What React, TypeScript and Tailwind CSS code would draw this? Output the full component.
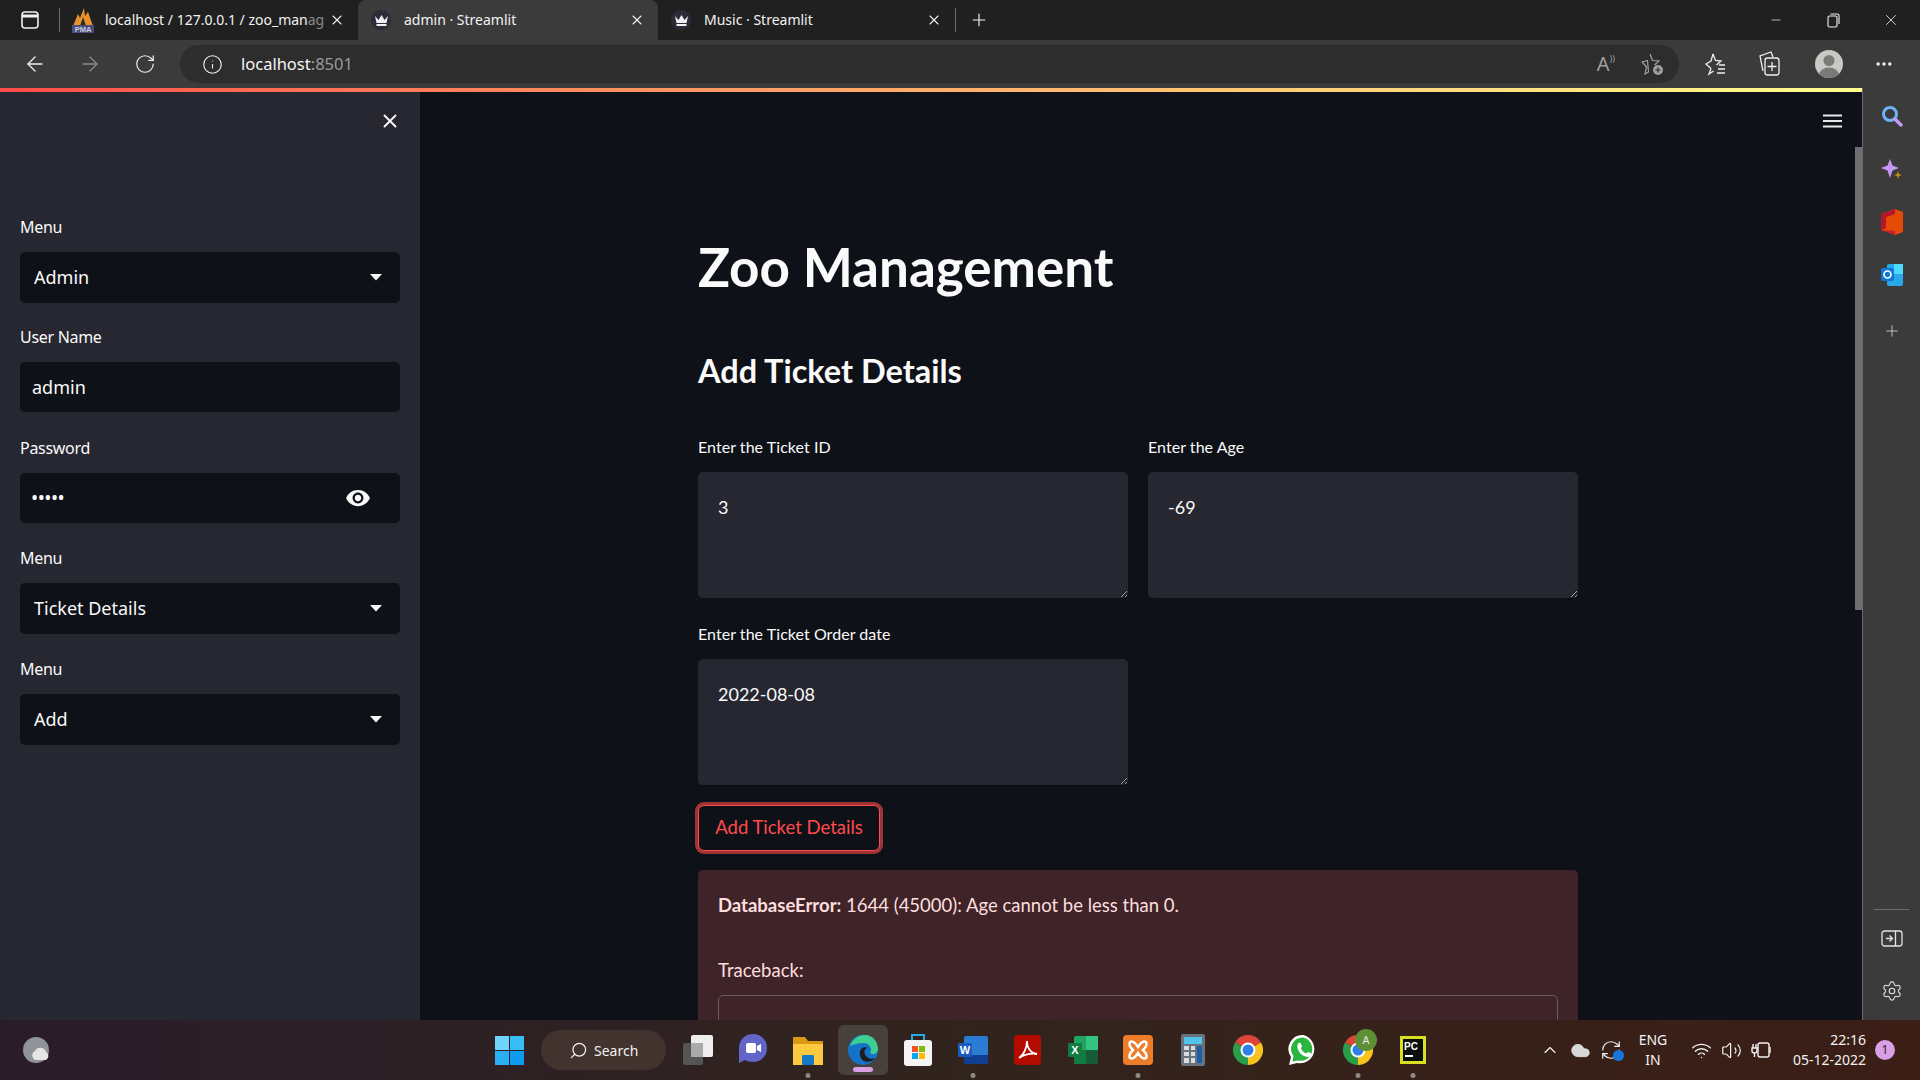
import React from "react";
import { ArrowLeft, ArrowRight, RotateCw, Info, Plus, X, Minus, Search, MoreHorizontal, Settings, ChevronUp, Volume2, Wifi, RefreshCw, Cloud } from "lucide-react";

const Crown = () => (
  <span className="flex h-5 w-5 items-center justify-center rounded-full bg-[#2b2b3a]">
    <svg width="13" height="11" viewBox="0 0 13 11"><path d="M0 1 3.5 5 6.500 0 9.500 5 13 1 11.500 8H1.500ZM1.500 9H11.500V11H1.500Z" fill="#f0f0f0" /></svg>
  </span>
);

const Pma = () => (
  <svg width="22" height="26" viewBox="0 0 22 26">
    <path d="M1 19 6 7 8 11 12 1 13 9 16 5 21 19Z" fill="#e8912c" />
    <path d="M8 19 11 10 14 19Z" fill="#2b2b2b" />
    <rect x="0" y="18" width="22" height="8" fill="#4a4f7a" />
    <text x="11" y="25" textAnchor="middle" fontSize="7.500" fontWeight="700" fill="#c9cbe0" fontFamily="Liberation Sans">PMA</text>
  </svg>
);

const Tab = ({ active, icon, label, width }: { active?: boolean; icon: React.ReactNode; label: string; width: string }) => (
  <div className={`relative flex h-10 items-center ${width} ${active ? "rounded-t-lg bg-[#3b3b3b]" : ""}`}>
    <span className="ml-[10px] flex w-[26px] shrink-0 justify-center">{icon}</span>
    <span className="ml-[10px] w-[222px] whitespace-nowrap pb-[1px] text-[14px] text-[#f2f2f2]">{label}</span>
    <X size={16} strokeWidth={1.6} className="absolute right-[13px] text-[#f0f0f0]" />
  </div>
);

const Label = ({ children, className = "" }: { children: React.ReactNode; className?: string }) => (
  <div className={`flex h-[37px] items-start pt-[3px] text-[16px] leading-[19px] text-[#fafafa] ${className}`}>{children}</div>
);

const Caret = () => (
  <svg width="12" height="7" viewBox="0 0 12 7"><path d="M0 0H12L6 6.500Z" fill="#fafafa" /></svg>
);

const Select = ({ label, value, cls = "" }: { label: string; value: string; cls?: string }) => (
  <div className={cls}>
    <Label className="tracking-[-0.3px]">{label}</Label>
    <div className="flex h-[51px] items-center justify-between rounded-[5px] bg-[#0e1117] pl-[14px] pr-[18px] text-[18px] text-[#fafafa]">
      {value}
      <Caret />
    </div>
  </div>
);

const Area = ({ label, value, cls = "" }: { label: string; value: string; cls?: string }) => (
  <div className={`w-[430px] ${cls}`}>
    <Label className="!pt-[2px] tracking-[0.05px]">{label}</Label>
    <textarea
      readOnly
      value={value}
      className="block h-[127px] w-full resize-y rounded-[5px] border-b border-[#0b0d12] bg-[#262730] px-[20px] py-[21px] text-[18px] leading-[28px] text-[#fafafa] outline-none [color-scheme:dark]"
    />
  </div>
);

const Dot = () => <span className="absolute bottom-[2px] left-1/2 h-[5px] w-[5px] -translate-x-1/2 rounded-full bg-[#8d8a86]" />;

const Cell = ({ children, dot }: { children: React.ReactNode; dot?: boolean }) => (
  <div className="relative flex h-[60px] w-[55px] items-center justify-center">
    {children}
    {dot && <Dot />}
  </div>
);

const Chrome = () => (
  <svg width="30" height="30" viewBox="0 0 30 30">
    <path d="M15 15 2 7.500A15 15 0 0 1 28 7.500Z" fill="#dd4437" />
    <path d="M15 15 2 7.500A15 15 0 0 0 15 30Z" fill="#2a9d4a" />
    <path d="M15 15 28 7.500A15 15 0 0 1 15 30Z" fill="#f8c31c" />
    <circle cx="15" cy="15" r="7.500" fill="#fff" />
    <circle cx="15" cy="15" r="5.500" fill="#2f7fe8" />
  </svg>
);

export default function App() {
  return (
    <div className="flex h-[1080px] w-[1920px] flex-col overflow-hidden bg-[#0e1117] [font-family:'Noto_Sans',sans-serif]">
      {/* tab strip */}
      <div className="flex h-10 shrink-0 items-center bg-[#202020]">
        <div className="flex w-[59px] justify-center">
          <svg width="18" height="18" viewBox="0 0 18 18" fill="none" stroke="#f2f2f2" strokeWidth="1.600"><rect x="1" y="1" width="16" height="16" rx="3" /><path d="M1 5H17" strokeWidth="3" /></svg>
        </div>
        <div className="h-6 w-px bg-[#6a6a6a]" />
        <div className="relative flex h-10 w-[298px] items-center">
          <span className="ml-[12px] w-[24px] shrink-0"><Pma /></span>
          <span className="ml-[9px] w-[215px] whitespace-nowrap pb-[1px] text-[14px] text-[#f2f2f2]">localhost / 127.0.0.1 / zoo_man<span className="text-[#8a8a8a]">ag</span></span>
          <X size={16} strokeWidth={1.6} className="absolute right-[13px] text-[#f0f0f0]" />
        </div>
        <Tab active width="w-[300px]" icon={<Crown />} label="admin · Streamlit" />
        <Tab width="w-[297px]" icon={<Crown />} label="Music · Streamlit" />
        <div className="h-6 w-px bg-[#6a6a6a]" />
        <Plus size={20} strokeWidth={1.4} className="ml-[13px] text-[#f2f2f2]" />
        <div className="ml-auto flex items-center text-[#f2f2f2]">
          <span className="flex w-[57px] justify-center"><Minus size={14} strokeWidth={1.2} /></span>
          <span className="flex w-[58px] justify-center">
            <svg width="13" height="15" viewBox="0 0 13 15" fill="none" stroke="#f2f2f2" strokeWidth="1.100"><rect x="1" y="3" width="9" height="11" rx="1.500" /><path d="M3.500 1H10.500A1.500 1.500 0 0 1 12 2.500V11" /></svg>
          </span>
          <span className="flex w-[58px] justify-center"><X size={18} strokeWidth={1.1} /></span>
        </div>
      </div>

      {/* toolbar */}
      <div className="flex h-12 shrink-0 items-center bg-[#3b3b3b] text-[#f0f0f0]">
        <div className="flex w-[180px] items-center">
          <span className="flex w-[70px] justify-center"><ArrowLeft size={24} strokeWidth={1.3} /></span>
          <span className="flex w-[40px] justify-center text-[#8a8a8a]"><ArrowRight size={24} strokeWidth={1.3} /></span>
          <span className="flex w-[70px] justify-center"><RotateCw size={22} strokeWidth={1.3} /></span>
        </div>
        <div className="flex h-[38px] w-[1499px] items-center rounded-full bg-[#2d2d2d]">
          <Info size={21} strokeWidth={1.3} className="ml-[22px]" />
          <span className="ml-[18px] text-[16.500px] text-[#f5f5f5]">localhost<span className="text-[#9a9a9a]">:8501</span></span>
          <div className="ml-auto mr-[14px] flex items-center gap-[26px] text-[#a0a0a0]">
            <span className="flex items-start text-[20px] leading-none">A<span className="text-[9px]">))</span></span>
            <svg width="24" height="24" viewBox="0 0 24 24" fill="none" stroke="#a0a0a0" strokeWidth="1.200"><path d="M9 2 11.500 8.500 18 9 13.500 13M7.500 20 4 22 5.500 15 1 10 6.500 8.500Z" /><circle cx="17" cy="18" r="5" fill="#a0a0a0" stroke="none" /><path d="M17 15.500V20.500M14.500 18H19.500" stroke="#2d2d2d" /></svg>
          </div>
        </div>
        <div className="flex items-center">
          <span className="ml-[24px] flex w-[26px] justify-center">
            <svg width="24" height="24" viewBox="0 0 24 24" fill="none" stroke="#f0f0f0" strokeWidth="1.300"><path d="M9 2 11.500 8.500 17 9 12.500 13M7 16.500 5 22 9.500 19M7 16.500 2 12 7 9 9 2" /><path d="M15 13H21M14 17H21M13 21H21" /></svg>
          </span>
          <span className="ml-[28px] flex w-[26px] justify-center">
            <svg width="24" height="26" viewBox="0 0 24 26" fill="none" stroke="#f0f0f0" strokeWidth="1.300"><path d="M5 20 2 5 13 1 15 6" /><rect x="7" y="7" width="14" height="17" rx="2.500" /><path d="M14 11V20M9.500 15.500H18.500" /></svg>
          </span>
          <span className="ml-[32px] flex h-[28px] w-[28px] items-end justify-center overflow-hidden rounded-full bg-[#c9c8c4]">
            <svg width="28" height="28" viewBox="0 0 28 28"><circle cx="14" cy="10.500" r="5.500" fill="#7a7a78" /><ellipse cx="14" cy="25" rx="10" ry="7.500" fill="#7a7a78" /></svg>
          </span>
          <MoreHorizontal size={20} strokeWidth={2} className="ml-[31px]" />
        </div>
      </div>

      {/* body */}
      <div className="flex min-h-0 flex-1">
        <div className="flex min-w-0 flex-1 flex-col">
          <div className="h-1 shrink-0 bg-gradient-to-r from-[#ff4b4b] to-[#ffff8c]" />
          <div className="flex min-h-0 flex-1">
            <aside className="relative w-[420px] shrink-0 bg-[#262730] px-[20px] pt-[123px]">
              <X size={22} strokeWidth={2} className="absolute left-[379px] top-[18px] text-[#fafafa]" />
              <Select label="Menu" value="Admin" />
              <div className="mt-[22px]">
                <Label className="tracking-[-0.3px]">User Name</Label>
                <div className="flex h-[51px] items-center rounded-[5px] border-b border-[#24262e] bg-[#0e1117] pl-[12px] text-[18px] text-[#fafafa]">admin</div>
              </div>
              <div className="mt-[23px]">
                <Label className="tracking-[-0.3px]">Password</Label>
                <div className="flex h-[50px] items-center justify-between rounded-[5px] bg-[#0e1117] pl-[11px] pr-[29px] text-[#fafafa]">
                  <span className="text-[19px] leading-none tracking-[-0.5px]">•••••</span>
                  <svg width="26" height="26" viewBox="0 0 24 24" fill="#fafafa"><path d="M12 4.500C7 4.500 2.730 7.610 1 12c1.730 4.390 6 7.500 11 7.500s9.270-3.110 11-7.500c-1.730-4.390-6-7.500-11-7.500zM12 17c-2.760 0-5-2.240-5-5s2.240-5 5-5 5 2.240 5 5-2.240 5-5 5zm0-8c-1.660 0-3 1.340-3 3s1.340 3 3 3 3-1.340 3-3-1.340-3-3-3z" /></svg>
                </div>
              </div>
              <Select label="Menu" value="Ticket Details" cls="mt-[23px]" />
              <Select label="Menu" value="Add" cls="mt-[23px]" />
            </aside>

            <main className="relative min-w-0 flex-1 overflow-hidden bg-[#0e1117] pl-[278px] [font-family:Lato,sans-serif]">
              <svg width="19" height="14" viewBox="0 0 19 14" className="absolute left-[1403px] top-[22px]"><path d="M0 1.500H19M0 7H19M0 12.500H19" stroke="#e8e8e8" strokeWidth="2" /></svg>
              <div className="absolute right-0 top-[55px] h-[463px] w-[7px] bg-[#6d6e71]" />
              <div className="w-[880px]">
                <h1 className="pt-[136px] text-[53px] font-bold leading-[78px] text-[#fafafa]">Zoo Management</h1>
                <h2 className="mt-[40px] text-[32.500px] font-bold leading-[50px] text-[#fafafa]">Add Ticket Details</h2>
                <div className="mt-[39px] flex gap-[20px]">
                  <Area label="Enter the Ticket ID" value="3" />
                  <Area label="Enter the Age" value="-69" />
                </div>
                <Area label="Enter the Ticket Order date" value="2022-08-08" cls="mt-[23px]" />
                <button className="mt-[19px] flex h-[46px] w-[182px] items-center justify-center rounded-[6px] border border-[#ff4b4b] bg-[#0e1117] text-[18.500px] text-[#ff4b4b] shadow-[0_0_0_3px_rgba(255,75,75,0.6)]">Add Ticket Details</button>
                <div className="mt-[19px] h-[300px] rounded-[5px] bg-[#3e2328] px-[20px] pt-[21px] text-[18.500px] text-[#ffdede]">
                  <p className="h-[28px] leading-[28px]"><strong className="font-bold">DatabaseError:</strong> 1644 (45000): Age cannot be less than 0.</p>
                  <p className="mt-[37px] h-[28px] leading-[28px]">Traceback:</p>
                  <div className="mt-[11px] h-[80px] rounded-[5px] border border-[#6e5a5e]" />
                </div>
              </div>
            </main>
          </div>
        </div>

        {/* edge sidebar */}
        <div className="flex w-[58px] shrink-0 flex-col items-center border-l border-[#6a6a6a] bg-[#3b3b3b]">
          <div className="flex h-[39px] items-end justify-center">
            <svg width="22" height="22" viewBox="0 0 22 22" fill="none"><circle cx="9" cy="9" r="6.500" stroke="#6db4f5" strokeWidth="3" /><path d="M14 14 20 20" stroke="#c49af0" strokeWidth="3.500" strokeLinecap="round" /></svg>
          </div>
          <div className="mt-[31px] flex h-[24px] items-center">
            <svg width="24" height="24" viewBox="0 0 24 24"><path d="M10 1 12.500 7.500 19 10 12.500 12.500 10 20 7.500 12.500 1 10 7.500 7.500Z" fill="#c49af0" /><path d="M18 13 19 16 22 17 19 18 18 21 17 18 14 17 17 16Z" fill="#c6901a" /></svg>
          </div>
          <div className="mt-[28px] flex h-[24px] items-center">
            <svg width="22" height="26" viewBox="0 0 22 26"><path d="M14 0 22 3V23L14 26 0 21V5Z" fill="#e64a05" /><path d="M14 0 0 5V21L5 19V8L14 5Z" fill="#b3172a" /><path d="M0 21 14 26V22Z" fill="#c41d3a" /></svg>
          </div>
          <div className="mt-[29px] flex h-[24px] items-center">
            <svg width="22" height="22" viewBox="0 0 22 22"><rect x="6" y="0" width="16" height="22" rx="2" fill="#28a8ea" /><rect x="13" y="0" width="9" height="10" fill="#50d9ff" /><rect x="0" y="4" width="13" height="13" rx="2" fill="#0f78d4" /><circle cx="6.500" cy="10.500" r="3.500" fill="none" stroke="#fff" strokeWidth="1.700" /></svg>
          </div>
          <Plus size={18} strokeWidth={1.1} className="mt-[35px] text-[#d8d8d8]" />
          <div className="mt-auto h-px w-[35px] bg-[#6e6e6e]" />
          <div className="mt-[20px] flex">
            <svg width="22" height="18" viewBox="0 0 22 18" fill="none" stroke="#e4e4e4" strokeWidth="1.300"><rect x="1" y="1" width="20" height="15" rx="2.500" /><path d="M14.500 1V16M5 8.500H11M8.500 5.500 11.500 8.500 8.500 11.500" /></svg>
          </div>
          <Settings size={22} strokeWidth={1.2} className="mb-[18px] mt-[32px] text-[#e4e4e4]" />
        </div>
      </div>

      {/* taskbar */}
      <div className="flex h-[60px] shrink-0 items-center bg-gradient-to-r from-[#2b1c2a] via-[#31241d] via-50% to-[#3b1e16] text-[#f2f2f2]">
        <div className="flex w-[495px] shrink-0 pl-[22px]">
          <svg width="30" height="30" viewBox="0 0 30 30"><circle cx="14" cy="15" r="13" fill="#8f9499" /><path d="M13 25a5 5 0 0 1 0-9 6 6 0 0 1 11 1 4.500 4.500 0 0 1 0 8Z" fill="#e6e6e6" /></svg>
        </div>
        <svg width="29" height="29" viewBox="0 0 29 29" className="shrink-0"><rect width="14" height="14" fill="#6fd4fb" /><rect x="15" width="14" height="14" fill="#37bdf8" /><rect y="15" width="14" height="14" fill="#2aaef4" /><rect x="15" y="15" width="14" height="14" fill="#0f9bf0" /></svg>
        <div className="ml-[17px] flex h-10 w-[125px] shrink-0 items-center rounded-full bg-[#42332e] pl-[28px] text-[14px]">
          <Search size={19} strokeWidth={1.6} className="-scale-x-100" />
          <span className="ml-[6px]">Search</span>
        </div>
        <div className="ml-[4px] flex shrink-0 items-center">
          <Cell>
            <svg width="30" height="30" viewBox="0 0 30 30"><rect x="0" y="8" width="20" height="22" rx="2" fill="#555" /><rect x="8" y="0" width="22" height="22" rx="2" fill="#eeeeee" /><rect x="8" y="8" width="12" height="14" fill="#aaaaaa" /></svg>
          </Cell>
          <Cell>
            <svg width="30" height="32" viewBox="0 0 30 32"><path d="M15 0C7 0 1 6 1 14V29L7 26C9 27 12 28 15 28 23 28 29 22 29 14 29 6 23 0 15 0Z" fill="#6264c7" /><rect x="8" y="9" width="10" height="10" rx="2" fill="#fff" /><path d="M19 12 23 10V18L19 16Z" fill="#fff" /></svg>
          </Cell>
          <Cell dot>
            <svg width="30" height="30" viewBox="0 0 30 30"><path d="M0 2H12L15 6H30V30H0Z" fill="#d79a11" /><rect y="9" width="30" height="21" fill="#fcc93f" /><rect x="9" y="20" width="12" height="10" rx="1" fill="#1579c4" /></svg>
          </Cell>
          <div className="relative mx-[2.500px] flex h-[50px] w-[50px] items-center justify-center rounded-md bg-[#48403a]">
            <svg width="30" height="30" viewBox="0 0 30 30"><circle cx="15" cy="15" r="15" fill="#1473c9" /><path d="M2 11C5 2 13 0 17 0 25 0 30 7 30 14 30 19 25 20 22 18 25 13 21 8 15 8 8 8 3 11 2 11Z" fill="#3ccf91" /><path d="M12 20C11 13 16 11 20 13 16 13 15 18 19 22 21 24 25 24 27 23 23 29 13 28 12 20Z" fill="#1d1d1d" /></svg>
            <span className="absolute bottom-[3px] h-[5px] w-[20px] rounded-full bg-[#d9a0e6]" />
          </div>
          <Cell>
            <svg width="28" height="32" viewBox="0 0 28 32"><path d="M8 6V1H20V6" fill="none" stroke="#29a8e8" strokeWidth="2" /><rect y="6" width="28" height="26" rx="3" fill="#f4f4f4" /><rect x="8" y="12" width="6" height="6" fill="#f35325" /><rect x="15" y="12" width="6" height="6" fill="#81bc06" /><rect x="8" y="19" width="6" height="6" fill="#05a6f0" /><rect x="15" y="19" width="6" height="6" fill="#ffba08" /></svg>
          </Cell>
          <Cell dot>
            <svg width="30" height="28" viewBox="0 0 30 28"><rect x="6" width="24" height="28" rx="2" fill="#2b7cd3" /><rect x="6" y="19" width="24" height="9" fill="#103f91" /><rect y="7" width="14" height="14" rx="1" fill="#185abd" /><text x="7" y="18" textAnchor="middle" fontSize="11" fontWeight="700" fill="#fff" fontFamily="Liberation Sans">W</text></svg>
          </Cell>
          <Cell>
            <svg width="27" height="30" viewBox="0 0 27 30"><rect width="27" height="30" rx="4" fill="#b30b00" /><path d="M5 23C10 20 13 12 13 6 13 14 18 19 23 19 17 18 10 20 5 23Z" fill="none" stroke="#fff" strokeWidth="1.800" /></svg>
          </Cell>
          <Cell>
            <svg width="30" height="28" viewBox="0 0 30 28"><rect x="6" width="24" height="28" rx="2" fill="#21a366" /><rect x="18" width="12" height="14" fill="#33c481" /><rect x="6" y="14" width="12" height="14" fill="#107c41" /><rect x="18" y="14" width="12" height="14" fill="#185c37" /><rect y="7" width="14" height="14" rx="1" fill="#107c41" /><text x="7" y="18" textAnchor="middle" fontSize="11" fontWeight="700" fill="#fff" fontFamily="Liberation Sans">X</text></svg>
          </Cell>
          <Cell dot>
            <svg width="30" height="30" viewBox="0 0 30 30"><rect width="30" height="30" rx="4" fill="#ee7d2b" /><path d="M7 7C10 5 13 9 15 12 17 9 20 5 23 7 25 10 22 13 20 15 22 17 25 20 23 23 20 25 17 21 15 18 13 21 10 25 7 23 5 20 8 17 10 15 8 13 5 10 7 7Z" fill="none" stroke="#fff" strokeWidth="2.500" /></svg>
          </Cell>
          <Cell>
            <svg width="24" height="32" viewBox="0 0 24 32"><rect width="24" height="32" rx="2" fill="#69727d" /><rect x="3" y="3" width="18" height="7" fill="#4fc3e8" /><path d="M3 12H8V16H3ZM10 12H14V16H10ZM3 18H8V22H3ZM10 18H14V22H10ZM3 24H8V29H3ZM10 24H14V29H10Z" fill="#d9dde0" /><rect x="16" y="12" width="5" height="17" fill="#1a5fa8" /></svg>
          </Cell>
          <Cell><Chrome /></Cell>
          <Cell>
            <svg width="30" height="32" viewBox="0 0 30 32"><path d="M15 1A14 14 0 0 0 3 23L1 31 9 29A14 14 0 1 0 15 1Z" fill="#fff" /><path d="M15 3.500A11.500 11.500 0 0 0 5.500 22L4.500 27.500 10 26.500A11.500 11.500 0 1 0 15 3.500Z" fill="#2ab540" /><path d="M10.500 9C12 8 13 9 14 12 14 13 13 13.500 13 14.500 14 17 16 18.500 18 19.500 19 19 19.500 18 20.500 18 23 19 24 20 23 21.500 21 24 17 23 13.500 20.500 10 17.500 8 12 10.500 9Z" fill="#fff" /></svg>
          </Cell>
          <Cell dot>
            <Chrome />
            <span className="absolute left-[25px] top-[9px] flex h-[22px] w-[22px] items-center justify-center rounded-full bg-[#5f8f35] text-[11px] text-[#e8e8e8]">A</span>
          </Cell>
          <Cell dot>
            <svg width="26" height="28" viewBox="0 0 26 28"><rect width="26" height="28" fill="#d8e021" /><rect x="3" y="3" width="20" height="22" fill="#0b0f0b" /><text x="4" y="14" fontSize="10" fontWeight="700" fill="#fff" fontFamily="Liberation Sans">PC</text><rect x="5" y="19" width="8" height="2" fill="#fff" /></svg>
          </Cell>
        </div>
        <div className="ml-auto flex items-center">
          <ChevronUp size={20} strokeWidth={1.4} />
          <Cloud size={21} strokeWidth={1} fill="#d8d8d8" className="ml-[10px] text-[#d8d8d8]" />
          <span className="relative ml-[9px]">
            <RefreshCw size={22} strokeWidth={1.3} />
            <span className="absolute bottom-0 right-[-2px] h-[11px] w-[11px] rounded-full bg-[#1677d8]" />
          </span>
          <div className="ml-[13px] w-[36px] text-center text-[14px] leading-[20px]">ENG<br />IN</div>
          <Wifi size={21} strokeWidth={1.6} className="ml-[20px]" />
          <Volume2 size={21} strokeWidth={1.4} className="ml-[9px]" />
          <svg width="22" height="20" viewBox="0 0 22 20" fill="none" stroke="#f2f2f2" strokeWidth="1.400" className="ml-[8px]"><rect x="8" y="3" width="11" height="14" rx="2" /><path d="M20 7V13M3 4V8M6 4V8M2 8H7V11C7 12 6 13 4.500 13S2 12 2 11ZM4.500 13V17" /></svg>
          <div className="ml-[12px] w-[82px] text-right text-[14px] leading-[20px]">22:16<br />05-12-2022</div>
          <span className="ml-[9px] mr-[25px] flex h-[20px] w-[20px] items-center justify-center rounded-full bg-[#d9a0e6] text-[12px] text-[#3a2020]">1</span>
        </div>
      </div>
    </div>
  );
}
